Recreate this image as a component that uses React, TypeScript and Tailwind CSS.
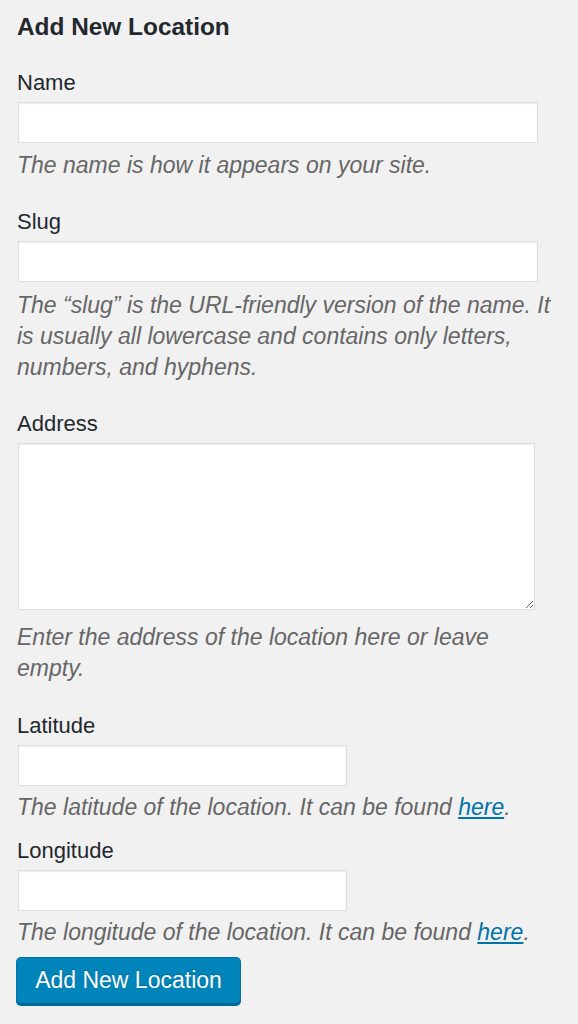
const font = "font-['Liberation_Sans',Arial,sans-serif]";

const Label = ({ children, className = "" }: { children: React.ReactNode; className?: string }) => (
  <label className={`block text-[22px] leading-[30px] text-[#23282d] ${className}`}>{children}</label>
);

const Desc = ({ children, className = "" }: { children: React.ReactNode; className?: string }) => (
  <p className={`text-[23px] leading-[31px] italic text-[#666] ${className}`}>{children}</p>
);

const inputCls =
  "block ml-px h-[41px] bg-white border border-[#dddddd] shadow-[inset_0_1px_2px_rgba(0,0,0,0.07)] outline-none px-2 text-[21px]";

const Here = () => (
  <a href="#" className="text-[#0073aa] underline">
    here
  </a>
);

export default function App() {
  return (
    <div className={`min-h-screen bg-[#f1f1f1] ${font}`}>
      <form className="flex flex-col pl-[17px] pr-[20px] pt-[12px] pb-[20px]">
        <h2 className="text-[24.4px] leading-[30px] font-bold text-[#23282d]">Add New Location</h2>

        {/* Name */}
        <Label className="mt-[26px]">Name</Label>
        <input type="text" className={`${inputCls} mt-[4px] w-[520px]`} />
        <Desc className="mt-[7px]">The name is how it appears on your site.</Desc>

        {/* Slug */}
        <Label className="mt-[26px]">Slug</Label>
        <input type="text" className={`${inputCls} mt-[4px] w-[520px]`} />
        <Desc className="mt-[8px]">
          The “slug” is the URL-friendly version of the name. It is usually all lowercase and contains only
          letters, numbers, and hyphens.
        </Desc>

        {/* Address */}
        <Label className="mt-[26px]">Address</Label>
        <textarea
          rows={5}
          className="block ml-px mt-[4px] w-[517px] h-[167px] bg-white border border-[#dddddd] shadow-[inset_0_1px_2px_rgba(0,0,0,0.07)] outline-none p-2 text-[21px]"
        />
        <Desc className="mt-[12px]">Enter the address of the location here or leave empty.</Desc>

        {/* Latitude */}
        <Label className="mt-[27px]">Latitude</Label>
        <input type="text" className={`${inputCls} mt-[4px] w-[329px]`} />
        <Desc className="mt-[6px]">
          The latitude of the location. It can be found <Here />.
        </Desc>

        {/* Longitude */}
        <Label className="mt-[13px]">Longitude</Label>
        <input type="text" className={`${inputCls} mt-[4px] w-[329px]`} />
        <Desc className="mt-[6px]">
          The longitude of the location. It can be found <Here />.
        </Desc>

        <div className="mt-[9px]">
          <button
            type="button"
            className="-ml-px h-[47px] w-[225px] rounded-[5px] bg-[#0085ba] border border-[#0073aa] border-b-[#006799] shadow-[0_2px_0_#006799] text-white text-[23px] [text-shadow:0_-1px_1px_#006799]"
          >
            Add New Location
          </button>
        </div>
      </form>
    </div>
  );
}
